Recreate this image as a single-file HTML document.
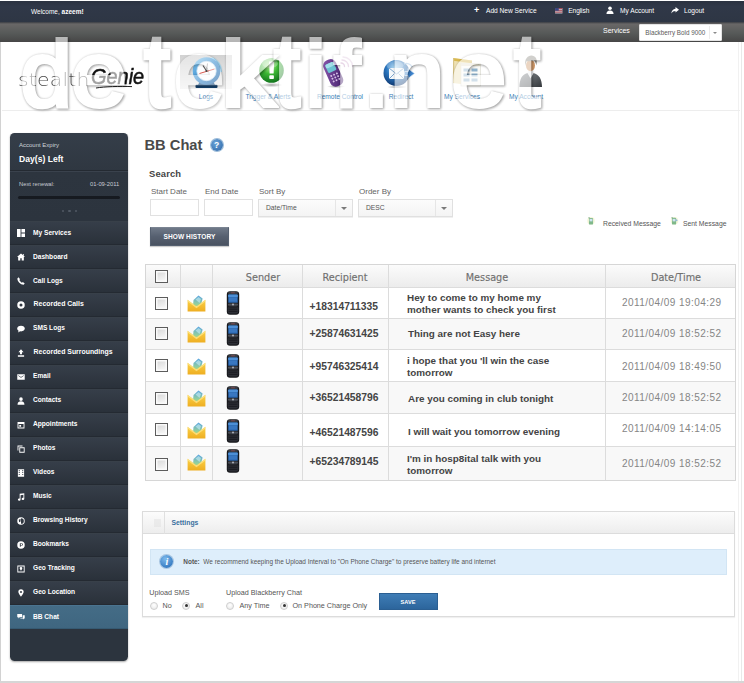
<!DOCTYPE html>
<html>
<head>
<meta charset="utf-8">
<title>BB Chat</title>
<style>
*{box-sizing:border-box;margin:0;padding:0}
html,body{width:744px;height:683px;overflow:hidden;background:#fff}
body{position:relative;font-family:"Liberation Sans",Arial,sans-serif;color:#555;font-size:8px}
.abs{position:absolute}
#frame{position:absolute;left:0;top:0;width:744px;height:683px}
#edgeL{left:0;top:42px;width:1px;height:640px;background:#d2d2d2}
#edgeR{left:738px;top:41px;width:4px;height:641px;border-left:1px solid #f1f1f1;border-right:1px solid #e9e9e9}
#edgeB{left:0;top:681px;width:744px;height:2px;background:#d6d6d6}
/* top bars */
#bar1{left:0;top:1px;width:744px;height:20.5px;background:linear-gradient(#2b3240,#303848 25%,#2e3644)}
#bar1 span{position:absolute;top:6px;color:#fff;font-size:6.6px;line-height:8px;white-space:nowrap}
#bar2{left:0;top:21.5px;width:744px;height:20px;background:linear-gradient(#3a3d44,#696767 10%,#575a59 55%,#464646)}
#svc{left:603px;top:27px;color:#fff;font-size:7px;line-height:8px}
#dd{left:638.5px;top:24px;width:83px;height:16.5px;background:#fff;border:1px solid #e4e4e4;border-radius:1px}
#dd span{position:absolute;left:5.800px;top:3.600px;font-size:6.3px;line-height:8px;color:#5a5a5a;white-space:nowrap}
#dd i{position:absolute;left:69px;top:1px;width:1px;height:12.500px;background:#ececec}
#dd b{position:absolute;left:73.500px;top:6.500px;border-left:2.500px solid transparent;border-right:2.500px solid transparent;border-top:2.500px solid #8a8a8a}
/* header */
#hdrline{left:2px;top:110px;width:738px;height:1px;background:#ededed}
.nav{position:absolute;top:92.900px;font-size:6.6px;line-height:8px;color:#3d7fb8;white-space:nowrap;transform:translateX(-50%)}
/* sidebar */
#side{left:10px;top:133px;width:118px;height:528px;background:linear-gradient(#353e49,#2f3741 37px,#2d353f 38px,#2c343e 88px,#2c343e);border-radius:4.500px;overflow:hidden;box-shadow:0 1px 2px rgba(0,0,0,.35)}
#side .t1{position:absolute;left:9px;top:8px;font-size:6px;line-height:8px;color:#cfd4da}
#side .t2{position:absolute;left:9px;top:21px;font-size:8.6px;line-height:10px;color:#fff;font-weight:bold}
#side .sep{position:absolute;left:0;width:118px;height:2px;border-top:1px solid #242a32;border-bottom:1px solid #3a424d}
#side .t3{position:absolute;top:47px;font-size:5.8px;line-height:8px;color:#c5cad1}
#side .prog{position:absolute;left:8px;top:63px;width:102px;height:3px;border-radius:2px;background:#161a20}
#side .dots{position:absolute;left:51.500px;top:76.500px;width:16px;height:3px}
#side .dots i{position:absolute;top:0;width:2.5px;height:2.5px;border-radius:1.3px;background:#505965}
.mi{position:absolute;left:0;width:118px;height:24px;border-top:1px solid #384049;border-bottom:1px solid #242a32;background:linear-gradient(#363e49,#2a313a)}
.mi span{position:absolute;left:23px;top:7px;font-size:6.6px;line-height:8px;color:#fff;font-weight:bold;white-space:nowrap}
.mi svg{position:absolute;left:7px;top:7.300px;width:8px;height:8px;fill:#fff}
.mi.on{background:linear-gradient(#446c86,#3f6680);border-top-color:#4a7490;border-bottom-color:#365a72}
/* main */
#title{left:144.5px;top:135.8px;font-size:14.7px;line-height:18px;font-weight:bold;color:#4a4a4a;white-space:nowrap}
#help{left:210.5px;top:139px;width:12px;height:12px;border-radius:6px;background:radial-gradient(circle at 40% 35%,#6aa3d8,#2a64a6);box-shadow:0 0 0 1px #9bbbd8}
#help span{position:absolute;left:0;top:1px;width:12px;text-align:center;font-size:8.5px;line-height:10px;font-weight:bold;color:#fff}
#search{left:149px;top:167.7px;font-size:9.4px;letter-spacing:.15px;line-height:11px;font-weight:bold;color:#444}
.lbl{position:absolute;top:186.900px;font-size:8px;line-height:9px;color:#646464;white-space:nowrap}
.inp{position:absolute;top:198.500px;height:17.500px;background:#fff;border:1px solid #e1e1e1}
.sel{position:absolute;top:198.500px;height:18.300px;background:linear-gradient(#fcfcfc,#f4f4f4);border:1px solid #e0e0e0;box-shadow:0 1px 0 #f0f0f0}
.sel span{position:absolute;left:7px;top:4.5px;font-size:6.7px;line-height:8px;color:#555}
.sel i{position:absolute;right:16px;top:0;width:1px;height:16.300px;background:#e6e6e6}
.sel b{position:absolute;right:5px;top:7.200px;border-left:3px solid transparent;border-right:3px solid transparent;border-top:3px solid #7a7a7a}
#btn{left:150px;top:226.5px;width:79px;height:19.5px;background:linear-gradient(#6f7988,#566070 50%,#4a5361);border:1px solid #556070;border-top-color:#7a8492;box-shadow:0 1px 1px rgba(0,0,0,.2)}
#btn span{position:absolute;left:0;top:5.200px;width:77px;text-align:center;font-size:6.55px;line-height:8px;font-weight:bold;color:#fff;letter-spacing:.1px}
.leg{position:absolute;top:219.700px;font-size:6.8px;line-height:8px;color:#555;white-space:nowrap}
/* table */
#tbl{left:145px;top:264px;width:590.5px;height:217px;border:1px solid #d6d6d6;background:#fff}
#tbl .hd{position:absolute;left:0;top:0;width:589px;height:22px;background:linear-gradient(#fbfbfb,#ececec)}
#tbl .v{position:absolute;top:0;width:1px;height:215px;background:#dcdcdc}
#tbl .h{position:absolute;left:0;width:589px;height:1px;background:#dcdcdc}
#tbl .alt{position:absolute;left:0;width:589px;background:#f8f8f8}
.th{position:absolute;top:8.3px;font-family:"DejaVu Sans",Verdana,sans-serif;font-size:9.7px;line-height:10px;color:#707070;-webkit-text-stroke:.15px #707070;transform:translateX(-50%);white-space:nowrap}
.cb{position:absolute;left:8.700px;width:13px;height:13px;border:1px solid #5c5c5c;background:linear-gradient(160deg,#d6d6d6,#f4f4f4 80%);box-shadow:inset 0 0 0 1.5px #fafafa}
.num{position:absolute;left:163.5px;font-family:"Liberation Sans",sans-serif;font-weight:bold;font-size:10.3px;line-height:11px;color:#444;white-space:nowrap;letter-spacing:0}
.msg{position:absolute;font-family:"Liberation Sans",sans-serif;font-weight:bold;font-size:9.9px;line-height:12px;color:#444;white-space:nowrap}
.dt{position:absolute;left:476px;font-family:"Liberation Sans",sans-serif;font-size:10px;line-height:11px;color:#858585;white-space:nowrap;letter-spacing:.45px}
.env{position:absolute;left:41px;width:19px;height:17px}
.ph{position:absolute;left:80px;width:14px;height:24px}
/* settings */
#set{left:141.5px;top:511px;width:593px;height:105.5px;border:1px solid #dcdcdc;background:#fff;box-shadow:0 1px 1px rgba(0,0,0,.06)}
#set .sh{position:absolute;left:0;top:0;width:591px;height:22px;background:linear-gradient(#fcfcfc,#ededed);border-bottom:1px solid #dcdcdc}
#set .sv{position:absolute;left:21.5px;top:0;width:1px;height:22px;background:#e0e0e0}
#set .st{position:absolute;left:29px;top:7px;font-size:6.8px;line-height:8px;font-weight:bold;color:#3a6f9e}
#note{position:absolute;left:7.800px;top:36.800px;width:576.500px;height:26.200px;background:#deeefb;border:1px solid #d2e5f4}
#note .ic{position:absolute;left:9px;top:5.500px;width:13px;height:13px;border-radius:7px;background:radial-gradient(circle at 40% 30%,#7db9ec,#1f66b3);box-shadow:0 0 0 1px #a9c6e2}
#note .ic span{position:absolute;left:0;top:1px;width:13px;text-align:center;font-family:"Liberation Serif",serif;font-style:italic;font-weight:bold;font-size:10px;line-height:11px;color:#fff}
#note .nt{position:absolute;left:32px;top:8.200px;font-size:6.45px;line-height:8px;color:#555;white-space:nowrap}
.sl{position:absolute;font-size:7.2px;line-height:9px;color:#555;white-space:nowrap}
.rd{position:absolute;width:8px;height:8px;border-radius:4px;margin:.5px 0 0 .5px;border:1px solid #cfcfcf;background:radial-gradient(circle at 50% 35%,#fff,#e6e6e6)}
.rd.on:after{content:"";position:absolute;left:1.500px;top:1.500px;width:3px;height:3px;border-radius:2px;background:#333}
#save{position:absolute;left:236px;top:81px;width:59px;height:17px;background:linear-gradient(#3f7db6,#2c659c);border:1px solid #2b5f92}
#save span{position:absolute;left:0;top:4px;width:57px;text-align:center;font-size:5.6px;line-height:8px;font-weight:bold;color:#fff}
#lg1{left:18px;top:67.6px;font-family:"DejaVu Sans Light","DejaVu Sans",sans-serif;font-weight:200;font-size:18.5px;line-height:24px;color:#4a4a4a;letter-spacing:.2px;white-space:nowrap;transform:scaleX(1.1);transform-origin:0 0}
#lg2{left:90.5px;top:65px;font-family:"Liberation Sans",sans-serif;font-style:italic;font-weight:normal;font-size:22.5px;line-height:24px;color:#111;-webkit-text-stroke:.55px #111;letter-spacing:0;white-space:nowrap;transform:scaleX(.885);transform-origin:0 0}
/* watermark */
#wm{left:0;top:23.6px;width:744px;height:100px;pointer-events:none;white-space:nowrap;font-size:93px;line-height:100px}
#wm span{display:inline-block;width:0;vertical-align:baseline;opacity:.6;filter:drop-shadow(1px 1px 1px rgba(0,0,0,.5)) drop-shadow(0 0 1px rgba(0,0,0,.3));font-size:93px;line-height:100px;color:#fff;-webkit-text-stroke:4px #fff;transform-origin:0 82.2px;white-space:nowrap}
</style>
</head>
<body>
<div id="frame">
<div class="abs" id="edgeL"></div><div class="abs" id="edgeR"></div><div class="abs" id="edgeB"></div>

<div class="abs" id="bar1">
  <span style="left:31px;top:6.800px;font-size:6.500px">Welcome, <b>azeem!</b></span>
  <span style="left:474px;top:5px;font-size:9px;font-weight:bold">+</span>
  <span style="left:486px">Add New Service</span>
  <svg class="abs" style="left:555px;top:7px;opacity:.8" width="7.500" height="5.500" viewBox="0 0 8 6"><rect width="8" height="6" fill="#e9e9ee"/><rect y="0" width="8" height="1" fill="#c9414d"/><rect y="2" width="8" height="1" fill="#c9414d"/><rect y="4" width="8" height="1" fill="#c9414d"/><rect width="4" height="3" fill="#3b4a8f"/></svg>
  <span style="left:568.300px;letter-spacing:-.1px">English</span>
  <svg class="abs" style="left:606px;top:5px" width="8" height="8" viewBox="0 0 8 8"><circle cx="4" cy="2.2" r="1.8" fill="#fff"/><path d="M0.5 8 C0.5 5 2.5 4.4 4 4.4 C5.5 4.4 7.5 5 7.5 8 Z" fill="#fff"/></svg>
  <span style="left:620px">My Account</span>
  <svg class="abs" style="left:671px;top:6px" width="8" height="7" viewBox="0 0 8 7"><path d="M4.5 0 L8 2.8 L4.5 5.6 L4.5 3.9 C2.6 3.9 1.3 4.6 0.3 6.6 C0.5 3.6 2 1.9 4.5 1.7 Z" fill="#fff"/></svg>
  <span style="left:684px">Logout</span>
</div>
<div class="abs" id="bar2"></div>
<div class="abs" id="svc">Services</div>
<div class="abs" id="dd"><span>Blackberry Bold 9000</span><i></i><b></b></div>

<div class="abs" id="hdrline"></div>
<div class="abs" id="lg1">stealth</div>
<div class="abs" id="lg2">Genie</div>
<svg class="abs" style="left:95px;top:82.5px" width="40" height="8" viewBox="0 0 40 8"><path d="M1 5 C10 3.500 24 3.200 37 3.600" stroke="#222" stroke-width="1" fill="none"/></svg>

<svg class="abs" style="left:0;top:41px" width="744" height="82" viewBox="0 41 744 82">
<defs>
<linearGradient id="gTab" x1="0" y1="0" x2="0" y2="1"><stop offset="0" stop-color="#d2d2d2"/><stop offset="1" stop-color="#f2f2f2"/></linearGradient>
<linearGradient id="gRing" x1="0" y1="0" x2="1" y2="1"><stop offset="0" stop-color="#8fd0f3"/><stop offset=".5" stop-color="#3f8fd0"/><stop offset="1" stop-color="#1f5f9f"/></linearGradient>
<radialGradient id="gGreen" cx=".42" cy=".3" r=".75"><stop offset="0" stop-color="#b9f59a"/><stop offset=".45" stop-color="#3cb634"/><stop offset="1" stop-color="#0d6d1a"/></radialGradient>
<radialGradient id="gBlue" cx=".45" cy=".32" r=".75"><stop offset="0" stop-color="#9bd4f5"/><stop offset=".45" stop-color="#2a76bf"/><stop offset="1" stop-color="#0a2c62"/></radialGradient>
<linearGradient id="gPurple" x1="0" y1="0" x2="1" y2="1"><stop offset="0" stop-color="#8c5bb0"/><stop offset="1" stop-color="#3f1c66"/></linearGradient>
<linearGradient id="gSuit" x1="0" y1="0" x2="1" y2="1"><stop offset="0" stop-color="#858a8e"/><stop offset="1" stop-color="#34383c"/></linearGradient>
<radialGradient id="gShadow" cx=".5" cy=".5" r=".5"><stop offset="0" stop-color="#000" stop-opacity=".35"/><stop offset="1" stop-color="#000" stop-opacity="0"/></radialGradient>
<linearGradient id="eg" x1="0" y1="0" x2="0" y2="1"><stop offset="0" stop-color="#5aa5e2"/><stop offset="1" stop-color="#9fd88e"/></linearGradient><linearGradient id="ey" x1="0" y1="0" x2="0" y2="1"><stop offset="0" stop-color="#fbd146"/><stop offset="1" stop-color="#eeae22"/></linearGradient>
</defs>
<!-- Logs (active tab) -->
<rect x="180" y="55" width="52" height="34" fill="url(#gTab)"/>
<path d="M197.500 86 L201 79 L212 79 L215.500 86 Z" fill="#1f5688"/>
<rect x="195.500" y="84.800" width="22" height="3.200" rx="1" fill="#143f68"/>
<path d="M212 57 a15 15 0 0 1 10 15 l-5 0 a10 10 0 0 0 -7 -10 z" fill="#a9def8"/>
<circle cx="206.500" cy="71" r="13.800" fill="url(#gRing)"/>
<circle cx="206.500" cy="71" r="9.700" fill="#fdfeff" stroke="#cfe3f1" stroke-width=".8"/>
<path d="M206.500 71 L203 65.500" stroke="#555" stroke-width="1.100" fill="none"/>
<path d="M206.500 71 L207.500 63.500" stroke="#888" stroke-width=".7" fill="none"/>
<path d="M199.500 73.500 L214.500 69" stroke="#d6453a" stroke-width=".9" fill="none"/>
<circle cx="206.500" cy="71" r="1" fill="#444"/>
<!-- Trigger & Alerts -->
<ellipse cx="271.500" cy="85" rx="11" ry="2.200" fill="url(#gShadow)"/>
<circle cx="271.500" cy="70.500" r="12.300" fill="url(#gGreen)"/>
<ellipse cx="270" cy="63.500" rx="8" ry="4.500" fill="#fff" opacity=".28"/>
<path d="M269 61.500 h5.200 l-.6 12 h-4 z" fill="#fff"/>
<rect x="269.300" y="75.200" width="4.600" height="3.800" rx=".8" fill="#fff"/>
<!-- Remote Control -->
<ellipse cx="336" cy="86.500" rx="9" ry="1.600" fill="url(#gShadow)"/>
<g transform="rotate(-24 333 73)">
<rect x="326.500" y="59" width="13.500" height="28" rx="5.500" fill="url(#gPurple)"/>
<rect x="328.800" y="62.500" width="9" height="9" rx="1.500" fill="#6cc3d3"/>
<rect x="328.800" y="62.500" width="9" height="4" rx="1.500" fill="#a2e0ea"/>
<g fill="#d5bfe6"><circle cx="330.200" cy="75" r="1"/><circle cx="333.300" cy="75" r="1"/><circle cx="336.400" cy="75" r="1"/><circle cx="330.200" cy="78" r="1"/><circle cx="333.300" cy="78" r="1"/><circle cx="336.400" cy="78" r="1"/><circle cx="330.200" cy="81" r="1"/><circle cx="333.300" cy="81" r="1"/><circle cx="336.400" cy="81" r="1"/></g>
</g>
<g fill="none" stroke="#c79bc4" stroke-width="1.300" stroke-linecap="round">
<path d="M341 63 a3.500 3.500 0 0 1 3.500 3.500"/><path d="M342 60 a6.500 6.500 0 0 1 6.500 6.500" opacity=".8"/><path d="M343 57 a9.500 9.500 0 0 1 9.500 9.500" opacity=".55"/>
</g>
<!-- Redirect -->
<ellipse cx="397" cy="87" rx="10" ry="1.600" fill="url(#gShadow)"/>
<circle cx="396.500" cy="73" r="13" fill="url(#gBlue)"/>
<ellipse cx="395" cy="65.500" rx="8.500" ry="4.500" fill="#fff" opacity=".25"/>
<path d="M389 68 h15 v11 h-15 z" fill="#f4f8fc"/>
<path d="M389 68 l7.500 6 l7.500 -6 M389 79 l5.500 -5.500 M404 79 l-5.500 -5.500" stroke="#6f9cc8" stroke-width=".9" fill="none"/>
<path d="M408 68.500 l0 3 l-3.500 0 l0 4 l3.500 0 l0 3 l6.500 -5 z" fill="#3c82cc" stroke="#dbeaf7" stroke-width=".7"/>
<path d="M404 64 a6 6 0 0 1 8 3" stroke="#9dbfe0" stroke-width="1.200" fill="none"/>
<!-- My Services -->
<path d="M453 58 L472 60.500 L472 85.500 L453 83 Z" fill="#efe2b4"/>
<path d="M453 58 L472 60.500 L472 63.300 L453 60.800 Z" fill="#d9b850"/>
<path d="M453 58 L453 83 L454.200 83.200 L454.200 58.200Z" fill="#d8c588"/>
<rect x="461" y="63.500" width="19.500" height="22.500" fill="#fbfbf7" stroke="#d5d5cc" stroke-width=".6"/>
<rect x="461" y="63.500" width="19.500" height="2.500" fill="#e6e2d0"/>
<g fill="#8fb2cc"><rect x="463.500" y="68.500" width="6" height="3"/><rect x="471.500" y="68.500" width="6" height="3"/><rect x="463.500" y="73.500" width="6" height="3"/><rect x="471.500" y="73.500" width="6" height="3"/><rect x="463.500" y="78.500" width="6" height="3"/><rect x="471.500" y="78.500" width="6" height="3"/></g>
<!-- My Account -->
<path d="M519.500 87 c0 -8 2.500 -12.500 8 -14 l3 3.500 l3 -3.500 c5.500 1.500 8.500 6 8.500 14 z" fill="url(#gSuit)"/>
<path d="M527.500 73 l3 5.500 l3 -5.500 l-1.200 -2.500 h-3.600 z" fill="#eef0f2"/>
<ellipse cx="530.500" cy="65.500" rx="4.500" ry="5.800" fill="#cf9868"/>
<path d="M525.300 66 c-1.200 -7 2.500 -10.500 6 -10.500 c4 0 6.800 3.500 5 10 c-.4 -3 -1.600 -4.800 -3 -5.300 c-2.300 1.300 -5.300 1.300 -6.500 .8 c-.8 1 -1.200 2.700 -1.500 5 z" fill="#8d8b82"/>
</svg>

<div class="nav" style="left:206px">Logs</div>
<div class="nav" style="left:268px">Trigger &amp; Alerts</div>
<div class="nav" style="left:340px">Remote Control</div>
<div class="nav" style="left:401px">Redirect</div>
<div class="nav" style="left:462px">My Services</div>
<div class="nav" style="left:526px">My Account</div>

<div class="abs" id="side">
  <div class="t1">Account Expiry</div>
  <div class="t2">Day(s) Left</div>
  <div class="sep" style="top:37px"></div>
  <div class="t3" style="left:9px">Next renewal:</div>
  <div class="t3" style="left:80px">01-09-2011</div>
  <div class="prog"></div>
  <div class="dots"><i style="left:0"></i><i style="left:6.500px"></i><i style="left:13px"></i></div>
  <div class="mi" style="top:88px"><svg viewBox="0 0 9 9"><path d="M0 0h4v9h-4zM5 0h4v4h-4zM5 5h4v4h-4z"/></svg><span>My Services</span></div>
  <div class="mi" style="top:112px"><svg viewBox="0 0 9 9"><path d="M4.5 0.5L0 4.5h1.3v4h2.4V6h1.6v2.5h2.4v-4H9zM6.6 1v1.4l1 .9V1z"/></svg><span>Dashboard</span></div>
  <div class="mi" style="top:136px"><svg viewBox="0 0 9 9"><path d="M1.8 0.3L0.4 1.6C0.4 5 4 8.6 7.4 8.6L8.7 7.2L6.6 5.6L5.6 6.4C4.4 5.8 3.2 4.6 2.6 3.4L3.4 2.4Z"/></svg><span>Call Logs</span></div>
  <div class="mi" style="top:160px"><svg viewBox="0 0 9 9" style="top:6.600px"><path fill-rule="evenodd" d="M4.5 0.3a4.2 4.2 0 1 0 0 8.4a4.2 4.2 0 1 0 0-8.4zM4.5 2.8a1.7 1.7 0 1 1 0 3.4a1.7 1.7 0 1 1 0-3.4z"/></svg><span style="top:6.2px;left:23.600px;font-size:6.900px">Recorded Calls</span></div>
  <div class="mi" style="top:184px"><svg viewBox="0 0 9 9" style="top:6.600px"><path d="M4.5 0.8C2 0.8 0.2 2.2 0.2 4C0.2 5 0.8 5.9 1.8 6.5L1.2 8.4L3.6 7.1C3.9 7.2 4.2 7.2 4.5 7.2C7 7.2 8.8 5.8 8.8 4C8.8 2.2 7 0.8 4.5 0.8Z"/></svg><span style="top:6.2px">SMS Logs</span></div>
  <div class="mi" style="top:208px"><svg viewBox="0 0 9 9" style="top:6.600px"><path d="M4.5 0.3L1.6 3.6h1.8v2.2h2.2V3.6h1.8zM1 7h7v1.6H1z"/></svg><span style="top:6.2px;left:23.600px;font-size:6.900px">Recorded Surroundings</span></div>
  <div class="mi" style="top:232px"><svg viewBox="0 0 9 9" style="top:6.600px"><path fill-rule="evenodd" d="M0.3 1.4h8.4v6.2H0.3zM1.3 2.6v0.6L4.5 5.4L7.7 3.2V2.6L4.5 4.6z"/></svg><span style="top:6.2px">Email</span></div>
  <div class="mi" style="top:256px"><svg viewBox="0 0 9 9" style="top:6.600px"><path d="M4.5 0.4a2 2 0 1 0 0 4a2 2 0 1 0 0-4zM0.6 8.6C0.6 6 2.4 4.9 4.5 4.9C6.6 4.9 8.4 6 8.4 8.6Z"/></svg><span style="top:6.2px">Contacts</span></div>
  <div class="mi" style="top:280px"><svg viewBox="0 0 9 9" style="top:6.600px"><path fill-rule="evenodd" d="M0.6 1.2h7.8v7.2H0.6zM1.6 3.4v4h5.8v-4zM2.6 4.4h2v2h-2z"/></svg><span style="top:6.2px">Appointments</span></div>
  <div class="mi" style="top:304px"><svg viewBox="0 0 9 9" style="top:6.600px"><path fill-rule="evenodd" d="M0.6 0.6h5.6v1H1.6v4.6h-1zM2.6 2.6h6v6h-6zM3.6 3.6v4h4v-4z"/></svg><span style="top:6.2px">Photos</span></div>
  <div class="mi" style="top:328px"><svg viewBox="0 0 9 9" style="top:6.600px"><path fill-rule="evenodd" d="M1 0.4h7v8.2H1zM2 1.2v1.2h1V1.2zM6 1.2v1.2h1V1.2zM2 3.4v1.2h1V3.4zM6 3.4v1.2h1V3.4zM2 5.6v1.2h1V5.6zM6 5.6v1.2h1V5.6z"/></svg><span style="top:6.2px">Videos</span></div>
  <div class="mi" style="top:352px"><svg viewBox="0 0 9 9" style="top:6.600px"><path d="M3 0.8L8.2 0.2V6.6a1.5 1.3 0 1 1-1-1.2V2L4 2.4V7.4a1.5 1.3 0 1 1-1-1.2Z"/></svg><span style="top:6.2px">Music</span></div>
  <div class="mi" style="top:376px"><svg viewBox="0 0 9 9" style="top:6.600px"><path fill-rule="evenodd" d="M4.5 0.3a4.2 4.2 0 1 0 0 8.4a4.2 4.2 0 1 0 0-8.4zM4.5 1.3a3.2 3.2 0 0 1 0 6.4zM2 3l2-1v3l-1.6 1z"/></svg><span style="top:6.2px">Browsing History</span></div>
  <div class="mi" style="top:400px"><svg viewBox="0 0 9 9" style="top:6.600px"><path fill-rule="evenodd" d="M4.5 0.3a4.2 4.2 0 1 0 0 8.4a4.2 4.2 0 1 0 0-8.4zM3.2 2.4h2a1.4 1.4 0 0 1 0 2.8H4.2v1.4h-1zM4.2 3.2v1.2h0.9a0.6 0.6 0 0 0 0-1.2z"/></svg><span style="top:6.2px">Bookmarks</span></div>
  <div class="mi" style="top:424px"><svg viewBox="0 0 9 9" style="top:6.600px"><path fill-rule="evenodd" d="M0.4 0.6h8.2v7.8H0.4zM1.4 1.6v5.8h6.2V1.6zM4.5 2.2a1.5 1.5 0 0 1 1.5 1.5c0 1-1.5 2.8-1.5 2.8S3 4.700 3 3.700A1.500 1.500 0 0 1 4.500 2.200z"/></svg><span style="top:6.2px">Geo Tracking</span></div>
  <div class="mi" style="top:448px"><svg viewBox="0 0 9 9" style="top:6.600px"><path fill-rule="evenodd" d="M4.5 0.2a3 3 0 0 1 3 3C7.500 5.200 4.500 8.800 4.500 8.800S1.500 5.200 1.500 3.200A3 3 0 0 1 4.500 0.200zM4.500 2.200a1.100 1.100 0 1 0 0 2.200a1.100 1.100 0 1 0 0-2.200z"/></svg><span style="top:6.2px">Geo Location</span></div>
  <div class="mi on" style="top:472px"><svg viewBox="0 0 9 9"><path d="M0.3 1h5.400v3.800H3L1.600 6.200V4.800H0.300zM6.400 2.600h2.300v3.600H7.600V7.400L6.300 6.200H3.800V5.600H6.400z"/></svg><span>BB Chat</span></div>
</div>

<div class="abs" id="title">BB Chat</div>
<div class="abs" id="help"><span>?</span></div>
<div class="abs" id="search">Search</div>
<div class="lbl" style="left:151px">Start Date</div>
<div class="lbl" style="left:205px">End Date</div>
<div class="lbl" style="left:259px">Sort By</div>
<div class="lbl" style="left:359px">Order By</div>
<div class="inp" style="left:150px;width:49px"></div>
<div class="inp" style="left:204px;width:49px"></div>
<div class="sel" style="left:258px;width:94.500px"><span>Date/Time</span><i></i><b></b></div>
<div class="sel" style="left:358px;width:95px"><span>DESC</span><i></i><b></b></div>
<div class="abs" id="btn"><span>SHOW HISTORY</span></div>
<div class="leg" style="left:603px">Received Message</div>
<div class="leg" style="left:683px">Sent Message</div>
<svg class="abs" style="left:586.500px;top:215.500px" width="8" height="9.500" viewBox="0 0 9 10"><circle cx="4.500" cy="5" r="4.200" fill="#f3f4cf" opacity=".8"/><rect x="2.200" y="1.800" width="4.600" height="7.500" rx="1" fill="#7fb88a"/><rect x="2.900" y="2.900" width="3.200" height="2.800" fill="#cfe3f2"/><rect x="1.800" y=".9" width="1" height="1.500" fill="#6b9c76"/></svg>
<svg class="abs" style="left:669.500px;top:215.500px" width="9" height="9.500" viewBox="0 0 10 10"><circle cx="5" cy="5" r="4.200" fill="#f3f4cf" opacity=".8"/><rect x="2.200" y="1.800" width="4.600" height="7.500" rx="1" fill="#7fb88a"/><rect x="2.900" y="2.900" width="3.200" height="2.800" fill="#cfe3f2"/><rect x="1.800" y=".9" width="1" height="1.500" fill="#6b9c76"/><path d="M6.500 3 l2.300 1.400 l-2.300 1.400z" fill="#8db4dc"/></svg>

<div class="abs" id="tbl">
  <div class="hd"></div>
  <div class="alt" style="top:53.5px;height:30.5px"></div>
  <div class="alt" style="top:117px;height:31px"></div>
  <div class="alt" style="top:182px;height:33px"></div>
  <div class="v" style="left:33.5px"></div>
  <div class="v" style="left:65.5px"></div>
  <div class="v" style="left:155.5px"></div>
  <div class="v" style="left:241.5px"></div>
  <div class="v" style="left:459px"></div>
  <div class="h" style="top:22px"></div>
  <div class="h" style="top:52.5px"></div>
  <div class="h" style="top:84px"></div>
  <div class="h" style="top:116px"></div>
  <div class="h" style="top:148px"></div>
  <div class="h" style="top:181px"></div>
  <div class="th" style="left:117px">Sender</div>
  <div class="th" style="left:199px">Recipient</div>
  <div class="th" style="left:341px">Message</div>
  <div class="th" style="left:530px">Date/Time</div>
  <div class="cb" style="top:5px"></div>
  <div class="cb" style="top:32.2px"></div>
  <svg class="env" style="top:30.1px" viewBox="0 0 19 17"><path d="M6.500 5 L11.500 .6 L15.600 3.600 L13.800 11 L6 11Z" fill="url(#eg)"/><path d="M8.500 4.500 L11.500 2 L14 4 L12.500 8Z" fill="#c9ecf5" opacity=".6"/><path d="M.6 4.800 L9.500 11.400 L18.400 4.800 V16.400 H.6Z" fill="url(#ey)"/><path d="M.6 4.800 L9.500 11.400 L18.400 4.800 L18.400 6.600 L9.500 13.200 L.6 6.600Z" fill="#fde58a" opacity=".75"/></svg>
  <svg class="ph" style="top:25.9px" viewBox="0 0 14 24"><rect x=".8" y=".3" width="12.400" height="23.400" rx="3.200" fill="#17181c"/><rect x="2" y=".9" width="10" height="2.200" rx="1.100" fill="#3a3c44"/><rect x="5" y="1.300" width="4" height=".9" rx=".4" fill="#7a4a52"/><rect x="2.200" y="3.600" width="9.600" height="8.200" rx=".6" fill="#2a66ae"/><rect x="2.200" y="3.600" width="9.600" height="2.600" rx=".6" fill="#4d8fd6"/><rect x="3" y="7" width="8" height="3.600" fill="#3d7cc6" opacity=".8"/><rect x="2" y="12.400" width="10" height="2.300" rx=".8" fill="#4b4e57"/><circle cx="7" cy="13.500" r=".9" fill="#b9bcc4"/><rect x="1.800" y="15.200" width="10.400" height="7.300" rx="2" fill="#2c2e35"/><path d="M2.500 16.900h9M2.500 18.700h9M2.500 20.500h9" stroke="#121317" stroke-width=".6"/></svg>
  <div class="num" style="top:36.2px">+18314711335</div>
  <div class="msg" style="left:261px;top:27.1px">Hey to come to my home my<br>mother wants to check you first</div>
  <div class="dt" style="top:32.2px">2011/04/09 19:04:29</div>
  <div class="cb" style="top:62.2px"></div>
  <svg class="env" style="top:61.0px" viewBox="0 0 19 17"><path d="M6.500 5 L11.500 .6 L15.600 3.600 L13.800 11 L6 11Z" fill="url(#eg)"/><path d="M8.500 4.500 L11.500 2 L14 4 L12.500 8Z" fill="#c9ecf5" opacity=".6"/><path d="M.6 4.800 L9.500 11.400 L18.400 4.800 V16.400 H.6Z" fill="url(#ey)"/><path d="M.6 4.800 L9.500 11.400 L18.400 4.800 L18.400 6.600 L9.500 13.200 L.6 6.600Z" fill="#fde58a" opacity=".75"/></svg>
  <svg class="ph" style="top:57.0px" viewBox="0 0 14 24"><rect x=".8" y=".3" width="12.400" height="23.400" rx="3.200" fill="#17181c"/><rect x="2" y=".9" width="10" height="2.200" rx="1.100" fill="#3a3c44"/><rect x="5" y="1.300" width="4" height=".9" rx=".4" fill="#7a4a52"/><rect x="2.200" y="3.600" width="9.600" height="8.200" rx=".6" fill="#2a66ae"/><rect x="2.200" y="3.600" width="9.600" height="2.600" rx=".6" fill="#4d8fd6"/><rect x="3" y="7" width="8" height="3.600" fill="#3d7cc6" opacity=".8"/><rect x="2" y="12.400" width="10" height="2.300" rx=".8" fill="#4b4e57"/><circle cx="7" cy="13.500" r=".9" fill="#b9bcc4"/><rect x="1.800" y="15.200" width="10.400" height="7.300" rx="2" fill="#2c2e35"/><path d="M2.500 16.900h9M2.500 18.700h9M2.500 20.500h9" stroke="#121317" stroke-width=".6"/></svg>
  <div class="num" style="top:62.8px">+25874631425</div>
  <div class="msg" style="left:262px;top:62.8px">Thing are not Easy here</div>
  <div class="dt" style="top:62.8px">2011/04/09 18:52:52</div>
  <div class="cb" style="top:94.0px"></div>
  <svg class="env" style="top:92.8px" viewBox="0 0 19 17"><path d="M6.500 5 L11.500 .6 L15.600 3.600 L13.800 11 L6 11Z" fill="url(#eg)"/><path d="M8.500 4.500 L11.500 2 L14 4 L12.500 8Z" fill="#c9ecf5" opacity=".6"/><path d="M.6 4.800 L9.500 11.400 L18.400 4.800 V16.400 H.6Z" fill="url(#ey)"/><path d="M.6 4.800 L9.500 11.400 L18.400 4.800 L18.400 6.600 L9.500 13.200 L.6 6.600Z" fill="#fde58a" opacity=".75"/></svg>
  <svg class="ph" style="top:88.8px" viewBox="0 0 14 24"><rect x=".8" y=".3" width="12.400" height="23.400" rx="3.200" fill="#17181c"/><rect x="2" y=".9" width="10" height="2.200" rx="1.100" fill="#3a3c44"/><rect x="5" y="1.300" width="4" height=".9" rx=".4" fill="#7a4a52"/><rect x="2.200" y="3.600" width="9.600" height="8.200" rx=".6" fill="#2a66ae"/><rect x="2.200" y="3.600" width="9.600" height="2.600" rx=".6" fill="#4d8fd6"/><rect x="3" y="7" width="8" height="3.600" fill="#3d7cc6" opacity=".8"/><rect x="2" y="12.400" width="10" height="2.300" rx=".8" fill="#4b4e57"/><circle cx="7" cy="13.500" r=".9" fill="#b9bcc4"/><rect x="1.800" y="15.200" width="10.400" height="7.300" rx="2" fill="#2c2e35"/><path d="M2.500 16.900h9M2.500 18.700h9M2.500 20.500h9" stroke="#121317" stroke-width=".6"/></svg>
  <div class="num" style="top:95.7px">+95746325414</div>
  <div class="msg" style="left:261px;top:90.4px">i hope that you 'll win the case<br>tomorrow</div>
  <div class="dt" style="top:95.5px">2011/04/09 18:49:50</div>
  <div class="cb" style="top:127.1px"></div>
  <svg class="env" style="top:124.8px" viewBox="0 0 19 17"><path d="M6.500 5 L11.500 .6 L15.600 3.600 L13.800 11 L6 11Z" fill="url(#eg)"/><path d="M8.500 4.500 L11.500 2 L14 4 L12.500 8Z" fill="#c9ecf5" opacity=".6"/><path d="M.6 4.800 L9.500 11.400 L18.400 4.800 V16.400 H.6Z" fill="url(#ey)"/><path d="M.6 4.800 L9.500 11.400 L18.400 4.800 L18.400 6.600 L9.500 13.200 L.6 6.600Z" fill="#fde58a" opacity=".75"/></svg>
  <svg class="ph" style="top:120.8px" viewBox="0 0 14 24"><rect x=".8" y=".3" width="12.400" height="23.400" rx="3.200" fill="#17181c"/><rect x="2" y=".9" width="10" height="2.200" rx="1.100" fill="#3a3c44"/><rect x="5" y="1.300" width="4" height=".9" rx=".4" fill="#7a4a52"/><rect x="2.200" y="3.600" width="9.600" height="8.200" rx=".6" fill="#2a66ae"/><rect x="2.200" y="3.600" width="9.600" height="2.600" rx=".6" fill="#4d8fd6"/><rect x="3" y="7" width="8" height="3.600" fill="#3d7cc6" opacity=".8"/><rect x="2" y="12.400" width="10" height="2.300" rx=".8" fill="#4b4e57"/><circle cx="7" cy="13.500" r=".9" fill="#b9bcc4"/><rect x="1.800" y="15.200" width="10.400" height="7.300" rx="2" fill="#2c2e35"/><path d="M2.500 16.900h9M2.500 18.700h9M2.500 20.500h9" stroke="#121317" stroke-width=".6"/></svg>
  <div class="num" style="top:126.5px">+36521458796</div>
  <div class="msg" style="left:262px;top:127.5px">Are you coming in club tonight</div>
  <div class="dt" style="top:127.0px">2011/04/09 18:52:52</div>
  <div class="cb" style="top:158.0px"></div>
  <svg class="env" style="top:157.3px" viewBox="0 0 19 17"><path d="M6.500 5 L11.500 .6 L15.600 3.600 L13.800 11 L6 11Z" fill="url(#eg)"/><path d="M8.500 4.500 L11.500 2 L14 4 L12.500 8Z" fill="#c9ecf5" opacity=".6"/><path d="M.6 4.800 L9.500 11.400 L18.400 4.800 V16.400 H.6Z" fill="url(#ey)"/><path d="M.6 4.800 L9.500 11.400 L18.400 4.800 L18.400 6.600 L9.500 13.200 L.6 6.600Z" fill="#fde58a" opacity=".75"/></svg>
  <svg class="ph" style="top:154.3px" viewBox="0 0 14 24"><rect x=".8" y=".3" width="12.400" height="23.400" rx="3.200" fill="#17181c"/><rect x="2" y=".9" width="10" height="2.200" rx="1.100" fill="#3a3c44"/><rect x="5" y="1.300" width="4" height=".9" rx=".4" fill="#7a4a52"/><rect x="2.200" y="3.600" width="9.600" height="8.200" rx=".6" fill="#2a66ae"/><rect x="2.200" y="3.600" width="9.600" height="2.600" rx=".6" fill="#4d8fd6"/><rect x="3" y="7" width="8" height="3.600" fill="#3d7cc6" opacity=".8"/><rect x="2" y="12.400" width="10" height="2.300" rx=".8" fill="#4b4e57"/><circle cx="7" cy="13.500" r=".9" fill="#b9bcc4"/><rect x="1.800" y="15.200" width="10.400" height="7.300" rx="2" fill="#2c2e35"/><path d="M2.500 16.900h9M2.500 18.700h9M2.500 20.500h9" stroke="#121317" stroke-width=".6"/></svg>
  <div class="num" style="top:161.7px">+46521487596</div>
  <div class="msg" style="left:262px;top:161.4px">I will wait you tomorrow evening</div>
  <div class="dt" style="top:157.5px">2011/04/09 14:14:05</div>
  <div class="cb" style="top:193.0px"></div>
  <svg class="env" style="top:188.8px" viewBox="0 0 19 17"><path d="M6.500 5 L11.500 .6 L15.600 3.600 L13.800 11 L6 11Z" fill="url(#eg)"/><path d="M8.500 4.500 L11.500 2 L14 4 L12.500 8Z" fill="#c9ecf5" opacity=".6"/><path d="M.6 4.800 L9.500 11.400 L18.400 4.800 V16.400 H.6Z" fill="url(#ey)"/><path d="M.6 4.800 L9.500 11.400 L18.400 4.800 L18.400 6.600 L9.500 13.200 L.6 6.600Z" fill="#fde58a" opacity=".75"/></svg>
  <svg class="ph" style="top:183.8px" viewBox="0 0 14 24"><rect x=".8" y=".3" width="12.400" height="23.400" rx="3.200" fill="#17181c"/><rect x="2" y=".9" width="10" height="2.200" rx="1.100" fill="#3a3c44"/><rect x="5" y="1.300" width="4" height=".9" rx=".4" fill="#7a4a52"/><rect x="2.200" y="3.600" width="9.600" height="8.200" rx=".6" fill="#2a66ae"/><rect x="2.200" y="3.600" width="9.600" height="2.600" rx=".6" fill="#4d8fd6"/><rect x="3" y="7" width="8" height="3.600" fill="#3d7cc6" opacity=".8"/><rect x="2" y="12.400" width="10" height="2.300" rx=".8" fill="#4b4e57"/><circle cx="7" cy="13.500" r=".9" fill="#b9bcc4"/><rect x="1.800" y="15.200" width="10.400" height="7.300" rx="2" fill="#2c2e35"/><path d="M2.500 16.900h9M2.500 18.700h9M2.500 20.500h9" stroke="#121317" stroke-width=".6"/></svg>
  <div class="num" style="top:190.5px">+65234789145</div>
  <div class="msg" style="left:261px;top:187.7px">I'm in hosp8ital talk with you<br>tomorrow</div>
  <div class="dt" style="top:192.5px">2011/04/09 18:52:52</div>
</div>

<div class="abs" id="set">
  <div class="sh"></div><div class="sv"></div>
  <div class="st">Settings</div><svg style="position:absolute;left:11px;top:7px" width="7" height="8" viewBox="0 0 7 8"><path d="M0 1h7M0 3h7M0 5h7M0 7h7" stroke="#dcdcdc" stroke-width=".8"/></svg>
  <div id="note"><div class="ic"><span>i</span></div><div class="nt"><b>Note:</b>&nbsp;&nbsp;We recommend keeping the Upload Interval to "On Phone Charge" to preserve battery life and internet</div></div>
  <div class="sl" style="left:6.800px;top:76px">Upload SMS</div>
  <div class="sl" style="left:83.500px;top:76px">Upload Blackberry Chat</div>
  <div class="rd" style="left:7px;top:89px"></div><div class="sl" style="left:20px;top:89px">No</div>
  <div class="rd on" style="left:39px;top:89px"></div><div class="sl" style="left:53px;top:89px">All</div>
  <div class="rd" style="left:83px;top:89px"></div><div class="sl" style="left:97px;top:89px">Any Time</div>
  <div class="rd on" style="left:137px;top:89px"></div><div class="sl" style="left:150px;top:89px">On Phone Charge Only</div>
  <div id="save"><span>SAVE</span></div>
</div>

<div class="abs" id="wm"><span style="margin-left:20.2px">d</span><span style="margin-left:50.9px;transform:scaleX(1.08)">e</span><span style="margin-left:72.9px;transform:scale(1,1.115)">t</span><span style="margin-left:30.2px;transform:scaleX(0.97);opacity:.4">e</span><span style="margin-left:46.5px;transform:scaleX(1.17)">k</span><span style="margin-left:53.3px;transform:scale(1,1.115)">t</span><span style="margin-left:31.3px">i</span><span style="margin-left:28.7px">f</span><span style="margin-left:29.5px">.</span><span style="margin-left:26.5px;transform:scaleX(1.05)">n</span><span style="margin-left:61px;transform:scaleX(1.07)">e</span><span style="margin-left:63px;transform:scale(1,1.115)">t</span></div>
</div>
</body>
</html>
